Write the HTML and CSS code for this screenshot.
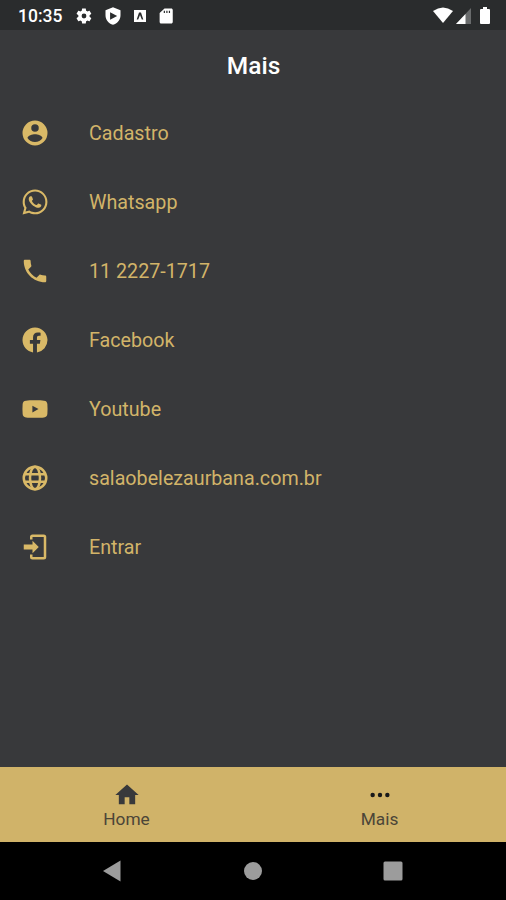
FILE: index.html
```html
<!DOCTYPE html>
<html lang="pt-BR">
    <head>
        <meta charset="UTF-8" />
        <meta name="viewport" content="width=device-width, initial-scale=1.0" />
        <title>Mais</title>
        <link rel="stylesheet" href="styles.css">
    </head>
    <body>
        <div class="app">
            <div class="status-bar">
                <span class="clock">10:35</span>
                <div class="notifications">
                    <svg width="18" height="18" viewBox="0 0 24 24"><path fill-rule="evenodd" d="M19.4 13a7.500 7.500 0 0 0 0-2l2.100-1.600c.2-.2.3-.4.100-.7l-2-3.400c-.1-.2-.4-.3-.6-.2l-2.500 1a7.300 7.300 0 0 0-1.700-1L14.400 2.400c0-.2-.2-.4-.5-.4h-4c-.2 0-.4.200-.5.400L9 5.100a7.300 7.300 0 0 0-1.700 1l-2.500-1c-.2-.1-.5 0-.6.200l-2 3.400c-.1.300 0 .5.100.7L4.500 11a7.500 7.500 0 0 0 0 2l-2.200 1.600c-.1.200-.2.400-.1.700l2 3.400c.1.200.4.300.6.200l2.500-1a7.300 7.300 0 0 0 1.700 1l.4 2.700c.1.200.3.400.5.400h4c.3 0 .5-.2.500-.4l.4-2.700a7.300 7.300 0 0 0 1.700-1l2.500 1c.2.100.5 0 .6-.2l2-3.400c.2-.3.100-.5-.1-.7zM12 8.800a3.200 3.200 0 1 1 0 6.400 3.200 3.200 0 0 1 0-6.400z" /></svg>
                    <svg width="20" height="20" viewBox="0 0 24 24"><path fill-rule="evenodd" d="M12 1.500 3 5v6c0 5.500 3.800 9.800 9 11.500 5.200-1.700 9-6 9-11.500V5zM8.500 7.500 17 12l-8.500 4.500z" /></svg>
                    <svg width="14" height="14" viewBox="0 0 14 14"><path fill-rule="evenodd" d="M1 1h12v12H1zM6 3.500 3.700 10.500h1.500L7 6l1.800 4.500h1.500L8 3.500z" /></svg>
                    <svg width="18" height="18" viewBox="0 0 24 24"><path fill-rule="evenodd" d="M19 2h-9L3.500 8v12c0 1.100.9 2 2 2H19c1.100 0 2-.9 2-2V4c0-1.100-.9-2-2-2zM9 5h1.600v3H9zm3.400 0H14v3h-1.600zm3.400 0h1.600v3h-1.600z" /></svg>
                </div>
                <div class="signals">
                    <svg width="20" height="17" viewBox="0 0 20 17"><path d="M0 4Q10-3 20 4L10 16z" /></svg>
                    <svg width="15" height="16" viewBox="0 0 15 16"><path class="dim" d="M15 0v16H0z" /><path d="M9.500 6v10H0z" /></svg>
                    <svg width="10" height="17" viewBox="0 0 10 17"><path d="M3 0h4v2h2q1 0 1 1v13q0 1-1 1H1q-1 0-1-1V3q0-1 1-1h2z" /></svg>
                </div>
            </div>

            <h1 class="title">Mais</h1>

            <ul class="menu">
                <li class="menu-item">
                    <svg class="icon" viewBox="0 0 24 24"><path fill-rule="evenodd" d="M12 2a10 10 0 1 0 0 20 10 10 0 0 0 0-20zm0 3a3 3 0 1 1 0 6 3 3 0 0 1 0-6zm0 14.200c-2.500 0-4.700-1.300-6-3.200 0-2 4-3.100 6-3.100s6 1.100 6 3.100c-1.300 1.900-3.500 3.200-6 3.200z" /></svg>
                    <span>Cadastro</span>
                </li>
                <li class="menu-item">
                    <svg class="icon" viewBox="0 0 24 24"><path d="M12.040 2C6.580 2 2.130 6.450 2.130 11.910C2.130 13.660 2.590 15.360 3.450 16.860L2.050 22L7.300 20.620C8.750 21.410 10.380 21.830 12.040 21.830C17.500 21.830 21.950 17.380 21.950 11.920C21.950 9.270 20.920 6.780 19.050 4.910C17.180 3.030 14.690 2 12.040 2M12.050 3.670C14.250 3.670 16.310 4.530 17.870 6.090C19.420 7.650 20.280 9.720 20.280 11.920C20.280 16.460 16.580 20.150 12.040 20.150C10.560 20.150 9.110 19.760 7.850 19L7.550 18.830L4.430 19.650L5.260 16.610L5.060 16.290C4.240 15 3.800 13.470 3.800 11.910C3.810 7.370 7.500 3.670 12.050 3.670M8.530 7.330C8.370 7.330 8.100 7.390 7.870 7.640C7.650 7.890 7 8.500 7 9.710C7 10.930 7.890 12.100 8 12.270C8.140 12.440 9.760 14.940 12.250 16C12.840 16.270 13.300 16.420 13.660 16.530C14.250 16.720 14.790 16.690 15.220 16.630C15.700 16.560 16.680 16.030 16.890 15.450C17.100 14.870 17.100 14.380 17.040 14.270C16.970 14.170 16.810 14.110 16.560 14C16.310 13.860 15.090 13.260 14.870 13.180C14.640 13.100 14.500 13.060 14.310 13.300C14.150 13.550 13.670 14.110 13.530 14.270C13.380 14.440 13.240 14.460 13 14.340C12.740 14.210 11.940 13.950 11 13.110C10.260 12.450 9.770 11.640 9.620 11.390C9.500 11.150 9.610 11 9.730 10.890C9.840 10.780 10 10.600 10.100 10.450C10.230 10.310 10.270 10.200 10.350 10.040C10.430 9.870 10.390 9.730 10.330 9.610C10.270 9.500 9.770 8.260 9.560 7.770C9.360 7.290 9.160 7.350 9 7.340Z" fill-rule="evenodd" /></svg>
                    <span>Whatsapp</span>
                </li>
                <li class="menu-item">
                    <svg class="icon" viewBox="0 0 24 24"><path d="M6.620 10.790c1.440 2.830 3.760 5.140 6.590 6.590l2.200-2.200c.27-.27.67-.36 1.020-.24 1.120.37 2.330.57 3.570.57.55 0 1 .45 1 1V20c0 .55-.45 1-1 1-9.390 0-17-7.610-17-17 0-.55.45-1 1-1h3.500c.55 0 1 .45 1 1 0 1.250.2 2.450.57 3.570.11.35.03.74-.25 1.020z" /></svg>
                    <span>11 2227-1717</span>
                </li>
                <li class="menu-item">
                    <svg class="icon" viewBox="0 0 24 24"><path d="M12 2.040C6.500 2.040 2 6.530 2 12.060C2 17.060 5.660 21.210 10.440 21.960V14.960H7.900V12.060H10.440V9.850C10.440 7.340 11.930 5.960 14.220 5.960C15.310 5.960 16.450 6.150 16.450 6.150V8.620H15.190C13.950 8.620 13.560 9.390 13.560 10.220V12.060H16.340L15.890 14.960H13.560V21.960A10 10 0 0 0 22 12.060C22 6.530 17.500 2.040 12 2.040Z" /></svg>
                    <span>Facebook</span>
                </li>
                <li class="menu-item">
                    <svg class="icon" viewBox="0 0 24 24"><path fill-rule="evenodd" d="M12 5c-3 0-5.600.1-7.200.300C3 5.500 2.200 6.500 2.100 8.200a50 50 0 0 0 0 7.600c.1 1.700.9 2.700 2.700 2.900 1.600.2 4.200.3 7.200.3s5.600-.1 7.200-.3c1.800-.2 2.600-1.200 2.700-2.900a50 50 0 0 0 0-7.600c-.1-1.700-.9-2.700-2.700-2.900C17.600 5.100 15 5 12 5zM9.900 9.300v5.400l4.900-2.700z" /></svg>
                    <span>Youtube</span>
                </li>
                <li class="menu-item">
                    <svg class="icon line" viewBox="0 0 24 24"><circle cx="12" cy="12" r="9" /><ellipse cx="12" cy="12" rx="4" ry="9" /><path d="M4 9h16M4 15h16" /></svg>
                    <span>salaobelezaurbana.com.br</span>
                </li>
                <li class="menu-item">
                    <svg class="icon" viewBox="0 0 24 24"><path d="M10 17v-3H3v-4h7V7l5 5zM10 2h9a2 2 0 0 1 2 2v16a2 2 0 0 1-2 2h-9a2 2 0 0 1-2-2v-2h2v2h9V4h-9v2H8V4a2 2 0 0 1 2-2z" /></svg>
                    <span>Entrar</span>
                </li>
            </ul>

            <nav class="tabs">
                <a class="tab">
                    <svg class="tab-icon" viewBox="0 0 24 24"><path d="M10 20v-6h4v6h5v-8h3L12 3 2 12h3v8z" /></svg>
                    <span>Home</span>
                </a>
                <a class="tab active">
                    <svg class="tab-icon" viewBox="0 0 24 24"><circle cx="5.700" cy="12" r="1.900" /><circle cx="12" cy="12" r="1.900" /><circle cx="18.300" cy="12" r="1.900" /></svg>
                    <span>Mais</span>
                </a>
            </nav>

            <div class="nav-bar">
                <svg width="20" height="22" viewBox="0 0 20 22"><path d="M1 11 18.500 .5v21z" /></svg>
                <svg width="20" height="20" viewBox="0 0 20 20"><circle cx="10" cy="10" r="9" /></svg>
                <svg width="20" height="20" viewBox="0 0 20 20"><rect x=".5" y=".5" width="19" height="19" rx="1.500" /></svg>
            </div>
        </div>
    </body>
</html>
```
FILE: styles.css
```css
* {
    box-sizing: border-box;
}

body {
    margin: 0;
    background-color: #38393b;
    font-family: Roboto, "Liberation Sans", sans-serif;
}

svg {
    display: block;
    flex-shrink: 0;
}

.app {
    display: flex;
    flex-direction: column;
    height: 900px;
    overflow: hidden;
}

.status-bar {
    display: flex;
    align-items: center;
    height: 30px;
    padding: 1px 16px 0 18px;
    background-color: #2a2c2d;
    color: #fff;
    fill: #fff;
}

.clock {
    width: 57px;
    font-size: 17.5px;
    font-weight: 500;
}

.notifications {
    display: flex;
    align-items: center;
    gap: 10px;
}

.signals {
    display: flex;
    align-items: center;
    gap: 3px;
    margin-left: auto;
}

.signals svg:last-child {
    margin-left: 6px;
}

.dim {
    fill: #696b6c;
}

.title {
    height: 69px;
    margin: 0;
    padding-left: 1px;
    color: #fff;
    font-size: 24.5px;
    font-weight: 500;
    line-height: 72px;
    text-align: center;
}

.menu {
    flex: 1;
    margin: 0;
    padding: 0;
    list-style: none;
}

.menu-item {
    display: flex;
    align-items: center;
    gap: 39px;
    height: 69px;
    padding-left: 20px;
    color: #d2b469;
    font-size: 19.7px;
}

.icon {
    width: 30px;
    height: 30px;
    margin-bottom: 1px;
    fill: #d9b967;
}

.line {
    fill: none;
    stroke: #d9b967;
    stroke-width: 2;
}

.tabs {
    display: flex;
    height: 75px;
    background-color: #d0b369;
}

.tab {
    display: flex;
    flex: 1;
    flex-direction: column;
    align-items: center;
    padding-top: 14px;
    color: #4b4538;
    font-size: 17.3px;
    line-height: 20px;
}

.tab-icon {
    width: 28px;
    height: 28px;
    fill: #38393b;
}

.active .tab-icon {
    fill: #18191a;
}

.nav-bar {
    display: flex;
    align-items: center;
    justify-content: space-between;
    height: 58px;
    padding: 0 103px 0 102px;
    background-color: #000;
    fill: #9c9c9c;
}
```
